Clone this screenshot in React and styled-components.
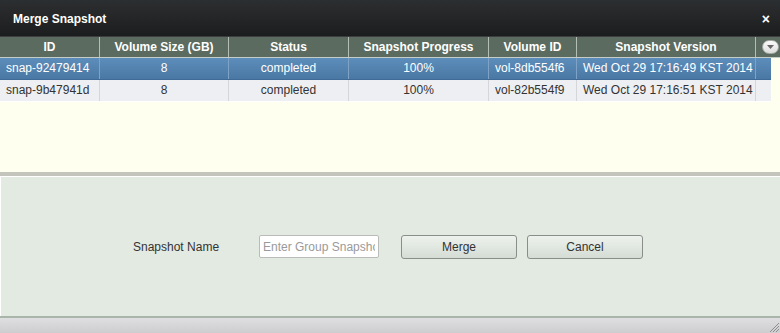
import React from 'react';
import styled, { createGlobalStyle } from 'styled-components';

const GlobalStyle = createGlobalStyle`
  html, body {
    margin: 0;
    padding: 0;
    background: #fff;
  }
  body {
    font-family: 'Liberation Sans', Arial, sans-serif;
    font-size: 12px;
  }
`;

const columns = [
  { key: 'id', label: 'ID', width: 100, align: 'left' },
  { key: 'size', label: 'Volume Size (GB)', width: 129, align: 'center' },
  { key: 'status', label: 'Status', width: 120, align: 'center' },
  { key: 'progress', label: 'Snapshot Progress', width: 140, align: 'center' },
  { key: 'volume', label: 'Volume ID', width: 88, align: 'left' },
  { key: 'version', label: 'Snapshot Version', width: 179, align: 'left' },
];

const snapshots = [
  {
    id: 'snap-92479414',
    size: '8',
    status: 'completed',
    progress: '100%',
    volume: 'vol-8db554f6',
    version: 'Wed Oct 29 17:16:49 KST 2014',
  },
  {
    id: 'snap-9b47941d',
    size: '8',
    status: 'completed',
    progress: '100%',
    volume: 'vol-82b554f9',
    version: 'Wed Oct 29 17:16:51 KST 2014',
  },
];

const gridTemplate = columns.map((c) => `${c.width}px`).join(' ') + ' 1fr';

const Window = styled.div`
  width: 780px;
  height: 333px;
  display: flex;
  flex-direction: column;
  overflow: hidden;
`;

const TitleBar = styled.div`
  height: 37px;
  flex: none;
  display: flex;
  align-items: center;
  justify-content: space-between;
  padding: 0 10px 0 13px;
  box-sizing: border-box;
  background: linear-gradient(#2c2f31, #1b1d1f);
  border-bottom: 1px solid #3b3d3f;
  color: #fff;
`;

const Title = styled.span`
  font-weight: bold;
  font-size: 12px;
  margin-top: 1px;
`;

const CloseButton = styled.span`
  font-weight: bold;
  font-size: 14px;
  line-height: 1;
  margin-top: 1px;
`;

const GridArea = styled.div`
  height: 135px;
  flex: none;
  background: #fffff0;
  display: flex;
  flex-direction: column;
`;

const HeaderRow = styled.div`
  display: grid;
  grid-template-columns: ${gridTemplate};
  height: 20px;
  background: #5c6b5f;
  border-bottom: 1px solid #c6ccc6;
`;

const HeaderCell = styled.div`
  color: #fff;
  font-weight: bold;
  text-align: center;
  line-height: 20px;
  border-right: 1px solid #b5beb6;
  white-space: nowrap;
  overflow: hidden;
`;

const MenuCell = styled.div`
  display: flex;
  align-items: center;
  justify-content: flex-end;
  padding-right: 1px;
`;

const MenuButton = styled.div`
  width: 15px;
  height: 12px;
  border-radius: 7px;
  border: 1px solid #a3a8a3;
  background: linear-gradient(#fafafa, #dcdedc);
  display: flex;
  align-items: center;
  justify-content: center;
`;

const Row = styled.div`
  display: grid;
  grid-template-columns: ${gridTemplate};
  height: 21px;
  margin-right: 9px;
  background: ${(p) =>
    p.$selected ? 'linear-gradient(#5d8dba, #4a78a5)' : '#eeeff2'};
  color: ${(p) => (p.$selected ? '#fff' : '#333')};
  border-bottom: 1px solid ${(p) => (p.$selected ? '#3f6a95' : '#fff')};
`;

const Cell = styled.div`
  line-height: 21px;
  padding: 0 6px;
  text-align: ${(p) => p.$align};
  border-right: 1px solid ${(p) => (p.$selected ? '#7fa3c6' : '#d4d6da')};
  white-space: nowrap;
  overflow: hidden;
`;

const Splitter = styled.div`
  height: 4px;
  flex: none;
  background: #c3c5bd;
  border-bottom: 1px solid #fff;
`;

const FormPanel = styled.div`
  flex: 1;
  background: #e3eae2;
  border-left: 1px solid #fff;
  display: flex;
  align-items: center;
  padding-left: 132px;
`;

const Label = styled.label`
  color: #333;
  width: 126px;
  margin-top: 1px;
`;

const NameInput = styled.input`
  width: 120px;
  height: 23px;
  box-sizing: border-box;
  border: 1px solid #b9bcb9;
  border-radius: 2px;
  padding: 0 3px;
  font-family: 'Liberation Sans', Arial, sans-serif;
  font-size: 12px;
  background: #fff;
  margin-right: 22px;
  &::placeholder {
    color: #9a9a9a;
  }
`;

const Button = styled.button`
  width: 116px;
  height: 24px;
  margin-right: 10px;
  border: 1px solid #8a8e8a;
  border-radius: 3px;
  background: linear-gradient(#eef2ee, #d4dcd4);
  color: #333;
  font-family: 'Liberation Sans', Arial, sans-serif;
  font-size: 12px;
  padding: 0;
`;

const Footer = styled.div`
  height: 15px;
  flex: none;
  border-top: 2px solid #aab5aa;
  background: linear-gradient(#dfdfe1, #cdcdcf);
  display: flex;
  justify-content: flex-end;
  align-items: flex-end;
`;

const Grip = () => (
  <svg width="12" height="12" viewBox="0 0 12 12">
    <g stroke="#8d8d8d" strokeWidth="1">
      <line x1="11" y1="2" x2="2" y2="11" />
      <line x1="11" y1="5" x2="5" y2="11" />
      <line x1="11" y1="8" x2="8" y2="11" />
    </g>
  </svg>
);

const App = () => (
  <>
    <GlobalStyle />
    <Window>
      <TitleBar>
        <Title>Merge Snapshot</Title>
        <CloseButton>×</CloseButton>
      </TitleBar>
      <GridArea>
        <HeaderRow>
          {columns.map((c) => (
            <HeaderCell key={c.key}>{c.label}</HeaderCell>
          ))}
          <MenuCell>
            <MenuButton>
              <svg width="7" height="4" viewBox="0 0 7 4">
                <path d="M0 0h7L3.5 4z" fill="#666" />
              </svg>
            </MenuButton>
          </MenuCell>
        </HeaderRow>
        {snapshots.map((s, i) => (
          <Row key={s.id} $selected={i === 0}>
            {columns.map((c) => (
              <Cell key={c.key} $align={c.align} $selected={i === 0}>
                {s[c.key]}
              </Cell>
            ))}
          </Row>
        ))}
      </GridArea>
      <Splitter />
      <FormPanel>
        <Label>Snapshot Name</Label>
        <NameInput placeholder="Enter Group Snapshot Name" />
        <Button>Merge</Button>
        <Button>Cancel</Button>
      </FormPanel>
      <Footer>
        <Grip />
      </Footer>
    </Window>
  </>
);

export default App;
